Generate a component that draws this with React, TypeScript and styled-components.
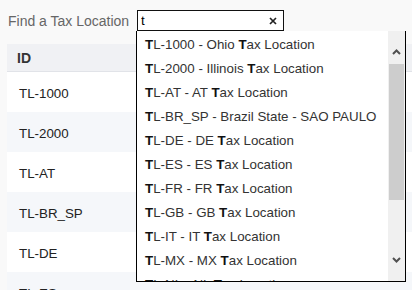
import React from 'react';
import styled, { createGlobalStyle } from 'styled-components';

const GlobalStyle = createGlobalStyle`
  body {
    margin: 0;
    background: #f9f9f9;
    font-family: "Liberation Sans", Arial, sans-serif;
  }
`;

const Page = styled.div`
  width: 412px;
  height: 290px;
  overflow: hidden;
`;

const SearchBar = styled.div`
  display: flex;
  align-items: center;
  height: 21px;
  padding: 10px 0 0 8px;
`;

const Label = styled.label`
  width: 129px;
  font-size: 14px;
  color: #666;
  white-space: nowrap;
`;

const Combo = styled.div`
  position: relative;
`;

const InputBox = styled.div`
  display: flex;
  align-items: center;
  box-sizing: border-box;
  width: 147px;
  height: 21px;
  border: 1px solid #111;
  background: #fff;
  padding: 0 6px 0 3px;
`;

const Input = styled.input`
  flex: 1;
  min-width: 0;
  border: none;
  outline: none;
  padding: 0;
  font-family: inherit;
  font-size: 13.33px;
  color: #000;
  background: transparent;
`;

const Dropdown = styled.div`
  position: absolute;
  top: 21px;
  left: -1px;
  z-index: 2;
  display: flex;
  box-sizing: border-box;
  width: 270px;
  height: 251px;
  border: 1px solid #000;
  border-top: none;
  background: #fff;
`;

const List = styled.ul`
  flex: 1;
  margin: 0;
  padding: 2px 0 0;
  list-style: none;
  overflow: hidden;
`;

const Item = styled.li`
  height: 24px;
  line-height: 24px;
  padding: 0 8px;
  font-size: 13.33px;
  color: #333;
  white-space: nowrap;
  b {
    color: #111;
  }
`;

const Scrollbar = styled.div`
  display: flex;
  flex-direction: column;
  width: 17px;
  background: #f0f0f0;
`;

const ScrollButton = styled.div<{ $h: number; $down?: boolean }>`
  display: flex;
  justify-content: center;
  align-items: ${p => (p.$down ? 'flex-start' : 'flex-end')};
  height: ${p => p.$h}px;
  padding: ${p => (p.$down ? '12px 0 0' : '0 0 9px')};
  box-sizing: border-box;
`;

const Thumb = styled.div`
  height: 136px;
  margin: 0 1px;
  background: #cdcdcd;
`;

const Track = styled.div`
  flex: 1;
`;

const Table = styled.table`
  margin: 13px 0 0 7px;
  width: 405px;
  border-collapse: collapse;
`;

const HeadCell = styled.th`
  height: 27px;
  padding: 1px 10px 0;
  line-height: 26px;
  text-align: left;
  font-size: 14px;
  font-weight: bold;
  color: #333;
  background: #f0f1f4;
  border-bottom: 1px solid #e1e3e8;
  box-sizing: border-box;
`;

const Row = styled.tr<{ $striped: boolean }>`
  background: ${p => (p.$striped ? '#f5f7fa' : '#fff')};
`;

const Cell = styled.td`
  height: 40px;
  padding: 4px 12px 0;
  line-height: 36px;
  font-size: 13.33px;
  color: #222;
  box-sizing: border-box;
`;

const options = [
  'TL-1000 - Ohio Tax Location',
  'TL-2000 - Illinois Tax Location',
  'TL-AT - AT Tax Location',
  'TL-BR_SP - Brazil State - SAO PAULO',
  'TL-DE - DE Tax Location',
  'TL-ES - ES Tax Location',
  'TL-FR - FR Tax Location',
  'TL-GB - GB Tax Location',
  'TL-IT - IT Tax Location',
  'TL-MX - MX Tax Location',
  'TL-NL - NL Tax Location',
];

const rows = ['TL-1000', 'TL-2000', 'TL-AT', 'TL-BR_SP', 'TL-DE', 'TL-ES'];

// bold the query letter where it starts a word
function highlight(text: string, query: string) {
  return text.split(/(\s+)/).map((word, i) =>
    word.toLowerCase().startsWith(query) ? (
      <React.Fragment key={i}>
        <b>{word.slice(0, query.length)}</b>
        {word.slice(query.length)}
      </React.Fragment>
    ) : (
      word
    )
  );
}

const Chevron = ({ down }: { down?: boolean }) => (
  <svg width="9" height="6" viewBox="0 0 9 6">
    <path
      d={down ? 'M1 1 L4.5 4.5 L8 1' : 'M1 5 L4.5 1.5 L8 5'}
      fill="none"
      stroke="#505050"
      strokeWidth="2"
    />
  </svg>
);

export default function App() {
  const query = 't';
  return (
    <Page>
      <GlobalStyle />
      <SearchBar>
        <Label>Find a Tax Location</Label>
        <Combo>
          <InputBox>
            <Input value={query} readOnly />
            <svg width="8" height="8" viewBox="0 0 8 8">
              <path d="M1 1 L7 7 M7 1 L1 7" stroke="#222" strokeWidth="1.7" />
            </svg>
          </InputBox>
          <Dropdown>
            <List>
              {options.map(o => (
                <Item key={o}>{highlight(o, query)}</Item>
              ))}
            </List>
            <Scrollbar>
              <ScrollButton $h={33}>
                <Chevron />
              </ScrollButton>
              <Thumb />
              <Track />
              <ScrollButton $h={36} $down>
                <Chevron down />
              </ScrollButton>
            </Scrollbar>
          </Dropdown>
        </Combo>
      </SearchBar>
      <Table>
        <thead>
          <tr>
            <HeadCell>ID</HeadCell>
          </tr>
        </thead>
        <tbody>
          {rows.map((r, i) => (
            <Row key={r} $striped={i % 2 === 1}>
              <Cell>{r}</Cell>
            </Row>
          ))}
        </tbody>
      </Table>
    </Page>
  );
}
